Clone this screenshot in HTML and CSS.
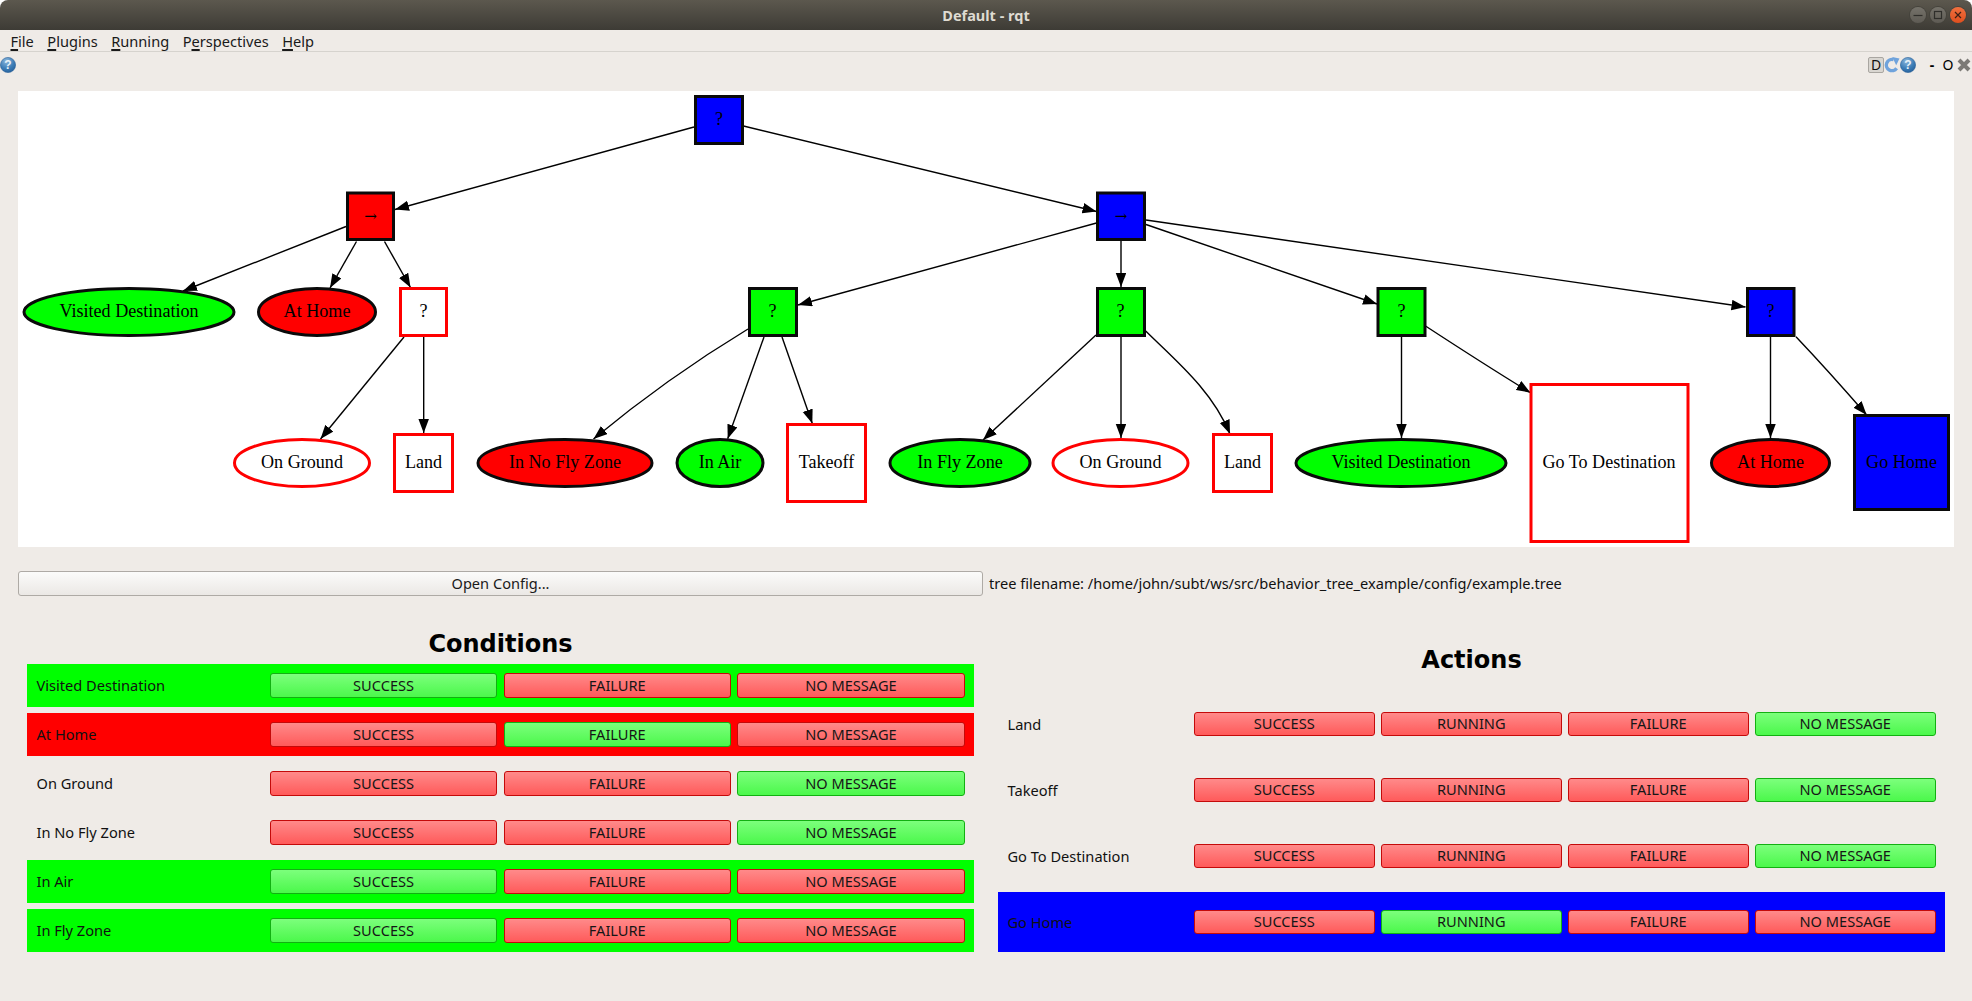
FILE: index.html
```html
<!DOCTYPE html>
<html lang="en">
<head>
<meta charset="utf-8">
<title>Default - rqt</title>
<link rel="stylesheet" href="styles.css">
</head>
<body>
<div class="app">
  <header class="titlebar">
    <span class="title">Default - rqt</span>
    <div class="winbtns">
      <span class="winbtn"><svg width="16" height="16" viewBox="0 0 16 16"><path class="wicon" d="M3.5 8.5h9"/></svg></span>
      <span class="winbtn"><svg width="16" height="16" viewBox="0 0 16 16"><rect class="wicon" x="4.5" y="4.5" width="7" height="7"/></svg></span>
      <span class="winbtn close"><svg width="16" height="16" viewBox="0 0 16 16"><path class="wicon dark" d="M5 5l6 6M11 5l-6 6"/></svg></span>
    </div>
  </header>
  <nav class="menubar">
    <span><u>F</u>ile</span>
    <span><u>P</u>lugins</span>
    <span><u>R</u>unning</span>
    <span>P<u>e</u>rspectives</span>
    <span><u>H</u>elp</span>
  </nav>
  <div class="toolbar">
    <svg class="help" width="16" height="16" viewBox="0 0 16 16"><use href="#helpicon"/></svg>
    <div class="tools">
      <span class="dbtn">D</span>
      <svg width="16" height="16" viewBox="0 0 16 16"><path class="refresh" d="M12.6 11.2A5.6 5.6 0 1 1 9.6 2.7"/><path class="refresh-head" d="M8.2 0l7.3 1.6-3.3 6.6z"/></svg>
      <svg width="16" height="16" viewBox="0 0 16 16"><use href="#helpicon"/></svg>
      <span class="tsym dash">-</span>
      <span class="tsym">O</span>
      <svg class="closex" width="16" height="16" viewBox="0 0 16 16"><path d="M3 3l10 10M13 3L3 13"/></svg>
    </div>
  </div>

  <svg width="0" height="0" class="defs">
    <defs>
      <radialGradient id="helpfill" cx="40%" cy="25%" r="85%">
        <stop offset="0" stop-color="#8db8dc"/>
        <stop offset="0.55" stop-color="#3f7fb8"/>
        <stop offset="1" stop-color="#1f5a96"/>
      </radialGradient>
      <g id="helpicon">
        <circle cx="8" cy="8" r="7.6" fill="url(#helpfill)" stroke="#2c6299" stroke-width="0.6"/>
        <text x="8" y="12.4" class="helpq">?</text>
      </g>
      <marker id="arrow" markerUnits="userSpaceOnUse" markerWidth="15" markerHeight="11" refX="14" refY="5.25" orient="auto">
        <path d="M0 0L14 5.25L0 10.5z" fill="#000"/>
      </marker>
    </defs>
  </svg>

  <main class="canvas">
    <svg class="graph" width="1936" height="456" viewBox="18 91 1936 456">
      <g class="edges">
        <path d="M694 127L395 209.500"/>
        <path d="M743.500 126L1096.500 211.500"/>
        <path d="M346 226.500L183 291"/>
        <path d="M356.500 241.500L330 288"/>
        <path d="M384.500 241.500L410.500 287.500"/>
        <path d="M404 337L320.500 439"/>
        <path d="M423.700 337V433"/>
        <path d="M1096.500 223L798 305"/>
        <path d="M1121 241V287"/>
        <path d="M1146 224.500L1377 304"/>
        <path d="M1146 220L1745.500 307"/>
        <path d="M748 329C715 349 655 388 593.500 439"/>
        <path d="M764 337L727.700 438.700"/>
        <path d="M782 337L812.300 423.500"/>
        <path d="M1096 335L983 440"/>
        <path d="M1121 337V438"/>
        <path d="M1145.700 331C1175 360 1212 390 1230 434"/>
        <path d="M1401.500 337V438"/>
        <path d="M1425.500 326C1450 342 1490 368 1530.500 392.700"/>
        <path d="M1770.500 337V438"/>
        <path d="M1796 336.700C1820 362 1845 390 1866.700 415"/>
      </g>

      <rect class="n blk blue" x="695.500" y="96.500" width="47" height="47"/>
      <text class="lbl" x="719" y="125">?</text>
      <rect class="n blk red" x="347.500" y="193" width="46" height="46.500"/>
      <text class="op" x="370.500" y="221">→</text>
      <rect class="n blk blue" x="1097.500" y="193" width="47" height="46.500"/>
      <text class="op" x="1121" y="221">→</text>

      <ellipse class="n blk green" cx="129" cy="312" rx="105" ry="23.500"/>
      <text class="lbl" x="129" y="317">Visited Destination</text>
      <ellipse class="n blk red" cx="317" cy="312" rx="58.500" ry="23.500"/>
      <text class="lbl" x="317" y="317">At Home</text>
      <rect class="n redl white" x="400.500" y="288.500" width="46" height="47"/>
      <text class="lbl" x="423.500" y="317">?</text>
      <rect class="n blk green" x="749.500" y="288.500" width="47" height="47"/>
      <text class="lbl" x="772.500" y="317">?</text>
      <rect class="n blk green" x="1097.500" y="288.500" width="47" height="47"/>
      <text class="lbl" x="1120.500" y="317">?</text>
      <rect class="n blk green" x="1378" y="288.500" width="47" height="47"/>
      <text class="lbl" x="1401.500" y="317">?</text>
      <rect class="n blk blue" x="1747.500" y="288.500" width="46.500" height="47"/>
      <text class="lbl" x="1770.500" y="317">?</text>

      <ellipse class="n redl white" cx="302" cy="463" rx="67.500" ry="23.500"/>
      <text class="lbl" x="302" y="468">On Ground</text>
      <rect class="n redl white" x="394.500" y="434.500" width="58" height="57"/>
      <text class="lbl" x="423.500" y="468">Land</text>
      <ellipse class="n blk red" cx="565" cy="463" rx="87" ry="23.500"/>
      <text class="lbl" x="565" y="468">In No Fly Zone</text>
      <ellipse class="n blk green" cx="720" cy="463" rx="43" ry="23.500"/>
      <text class="lbl" x="720" y="468">In Air</text>
      <rect class="n redl white" x="787.500" y="424.500" width="78" height="77"/>
      <text class="lbl" x="826.500" y="468">Takeoff</text>
      <ellipse class="n blk green" cx="960" cy="463" rx="70" ry="23.500"/>
      <text class="lbl" x="960" y="468">In Fly Zone</text>
      <ellipse class="n redl white" cx="1120.500" cy="463" rx="67.500" ry="23.500"/>
      <text class="lbl" x="1120.500" y="468">On Ground</text>
      <rect class="n redl white" x="1213.500" y="434.500" width="58" height="57"/>
      <text class="lbl" x="1242.500" y="468">Land</text>
      <ellipse class="n blk green" cx="1401" cy="463" rx="105" ry="23.500"/>
      <text class="lbl" x="1401" y="468">Visited Destination</text>
      <rect class="n redl white" x="1531" y="384.500" width="157" height="157"/>
      <text class="lbl" x="1609" y="468">Go To Destination</text>
      <ellipse class="n blk red" cx="1770.500" cy="463" rx="59" ry="23.500"/>
      <text class="lbl" x="1770.500" y="468">At Home</text>
      <rect class="n blk blue" x="1854.500" y="415.500" width="94" height="94"/>
      <text class="lbl" x="1901.500" y="468">Go Home</text>
    </svg>
  </main>

  <div class="config">
    <button class="open">Open Config...</button>
    <span class="fname">tree filename: /home/john/subt/ws/src/behavior_tree_example/config/example.tree</span>
  </div>

  <div class="panels">
    <section class="panel cond">
      <h2>Conditions</h2>
      <div class="rows">
        <div class="row bg-green"><span class="name">Visited Destination</span><div class="btns"><button class="b g">SUCCESS</button><button class="b r">FAILURE</button><button class="b r">NO MESSAGE</button></div></div>
        <div class="row bg-red"><span class="name">At Home</span><div class="btns"><button class="b r">SUCCESS</button><button class="b g">FAILURE</button><button class="b r">NO MESSAGE</button></div></div>
        <div class="row"><span class="name">On Ground</span><div class="btns"><button class="b r">SUCCESS</button><button class="b r">FAILURE</button><button class="b g">NO MESSAGE</button></div></div>
        <div class="row"><span class="name">In No Fly Zone</span><div class="btns"><button class="b r">SUCCESS</button><button class="b r">FAILURE</button><button class="b g">NO MESSAGE</button></div></div>
        <div class="row bg-green"><span class="name">In Air</span><div class="btns"><button class="b g">SUCCESS</button><button class="b r">FAILURE</button><button class="b r">NO MESSAGE</button></div></div>
        <div class="row bg-green"><span class="name">In Fly Zone</span><div class="btns"><button class="b g">SUCCESS</button><button class="b r">FAILURE</button><button class="b r">NO MESSAGE</button></div></div>
      </div>
    </section>
    <section class="panel act">
      <h2>Actions</h2>
      <div class="rows">
        <div class="row"><span class="name">Land</span><div class="btns"><button class="b r">SUCCESS</button><button class="b r">RUNNING</button><button class="b r">FAILURE</button><button class="b g">NO MESSAGE</button></div></div>
        <div class="row"><span class="name">Takeoff</span><div class="btns"><button class="b r">SUCCESS</button><button class="b r">RUNNING</button><button class="b r">FAILURE</button><button class="b g">NO MESSAGE</button></div></div>
        <div class="row"><span class="name">Go To Destination</span><div class="btns"><button class="b r">SUCCESS</button><button class="b r">RUNNING</button><button class="b r">FAILURE</button><button class="b g">NO MESSAGE</button></div></div>
        <div class="row bg-blue"><span class="name">Go Home</span><div class="btns"><button class="b r">SUCCESS</button><button class="b g">RUNNING</button><button class="b r">FAILURE</button><button class="b r">NO MESSAGE</button></div></div>
      </div>
    </section>
  </div>
</div>
</body>
</html>
```
FILE: styles.css
```css
* { box-sizing: border-box; }
html, body { margin: 0; padding: 0; height: 100%; overflow: hidden; background: #fff; }
body { font-family: "Noto Sans", "Open Sans", sans-serif; font-size: 14.600px; color: #111; }
.app { height: 1001px; display: flex; flex-direction: column; }

.titlebar {
  height: 30px; flex: none; display: flex; align-items: center; justify-content: flex-end;
  position: relative; padding-right: 6px;
  border-radius: 8px 8px 0 0;
  background: linear-gradient(#5c584e, #3d3b35);
}
.title {
  position: absolute; left: 0; right: 0; text-align: center;
  color: #dfdbd2; font-weight: 700; font-size: 14.500px; line-height: 28px;
}
.winbtns { display: flex; gap: 4px; position: relative; }
.winbtn {
  width: 16px; height: 16px; border-radius: 50%;
  background: linear-gradient(#75726a, #5e5b54);
  box-shadow: 0 0 0 1px #45433c; display: block;
}
.winbtn svg { display: block; }
.winbtn.close { background: linear-gradient(#f0703f, #df4f1e); }
.wicon { fill: none; stroke: #2f2e2a; stroke-width: 1.2; }
.wicon.dark { stroke: #3c2015; }

.menubar {
  height: 22px; flex: none; display: flex; gap: 13.500px; align-items: center; padding: 0 0 0 10.500px;
  background: #efebe7; border-bottom: 1px solid #d6d3ce; font-size: 14.600px; color: #1a1a1a;
}
.menubar u { text-decoration-thickness: 2px; text-underline-offset: 2px; }

.toolbar {
  height: 39px; flex: none; display: flex; justify-content: space-between; align-items: flex-start;
  padding: 5px 0 0 0; background: #efebe7;
}
.toolbar svg { display: block; }
.tools { display: flex; align-items: center; padding-right: 0; height: 16px; }
.dbtn {
  width: 16px; height: 16px; background: #d9d6d1; border: 1px solid #a9a6a1; border-radius: 2px;
  font-size: 14px; line-height: 14px; text-align: center; color: #111;
}
.refresh { fill: none; stroke: #6fa3dc; stroke-width: 3.4; }
.refresh-head { fill: #6fa3dc; }
.helpq { font-family: "Liberation Sans", sans-serif; font-weight: 700; font-size: 12px; fill: #e9f2f8; text-anchor: middle; }
.tsym { font-size: 14px; line-height: 16px; color: #000; text-align: center; width: 16px; }
.tsym.dash { margin-left: 8px; font-weight: 700; }
.closex { fill: none; }
.closex path { stroke: #7c7a76; stroke-width: 4; fill: none; }
.defs { position: absolute; }

.canvas { flex: none; height: 456px; background: #efebe7; padding: 0 18px; }
.graph { display: block; background: #fff; }
.edges path { fill: none; stroke: #000; stroke-width: 1.4; marker-end: url(#arrow); }
.n { stroke-width: 3; }
.blk { stroke: #0a0a0a; }
.redl { stroke: #f00; }
.blue { fill: #00f; }
.red { fill: #f00; }
.green { fill: #0f0; }
.white { fill: #fff; }
.lbl { font-family: "Liberation Serif", serif; font-size: 18.100px; text-anchor: middle; fill: #000; }
.op { font-family: "DejaVu Serif", serif; font-size: 15px; text-anchor: middle; fill: #000; }

.config {
  flex: none; display: flex; align-items: center; gap: 6px;
  background: #efebe7; padding: 24px 18px 0;
}
.open {
  width: 965px; height: 25px; padding: 0 0 2px;
  font: 14.600px "Noto Sans", sans-serif; color: #1a1a1a;
  border: 1px solid #aeaaa5; border-radius: 3px;
  background: linear-gradient(#fbfbfa, #ebe8e5);
}
.fname { font-size: 14.600px; color: #111; white-space: nowrap; position: relative; top: -1px; }

.panels {
  flex: 1; display: flex; align-items: flex-start; gap: 24px;
  background: #efebe7; padding: 32px 27px 0;
}
.panel { flex: 1; min-width: 0; }
.panel h2 {
  margin: 0; padding-top: 1px; height: 30px; text-align: center; font: 700 24px/30px "DejaVu Sans", sans-serif; color: #000;
}
.rows { display: grid; }
.cond .rows { grid-auto-rows: 43px; gap: 6px; margin-top: 6px; }
.act { padding-top: 16px; }
.act .rows { grid-auto-rows: 60px; gap: 6px; margin-top: 20px; }

.row { display: flex; align-items: center; padding: 0 9.500px; }
.bg-green { background: #0f0; }
.bg-red { background: #f00; }
.bg-blue { background: #00f; }
.name { font-size: 14.600px; color: #111; white-space: nowrap; padding-bottom: 2px; }
.btns { flex: none; display: flex; gap: 6.500px; margin-left: auto; }
.cond .btns { width: 694.500px; }
.act .btns { width: 741.500px; }
.act .name { position: relative; top: 1px; }
.b {
  flex: 1; height: 24.500px; padding: 0 0 2px; border-radius: 3px; border: 1px solid;
  font: 14.600px "Noto Sans", sans-serif; color: #161616;
}
.b.r { background: linear-gradient(#ff8a8a, #ff5a5a); border-color: #c40a0a; }
.b.g { background: linear-gradient(#7cff7c, #4bf84b); border-color: #12b012; }
```
